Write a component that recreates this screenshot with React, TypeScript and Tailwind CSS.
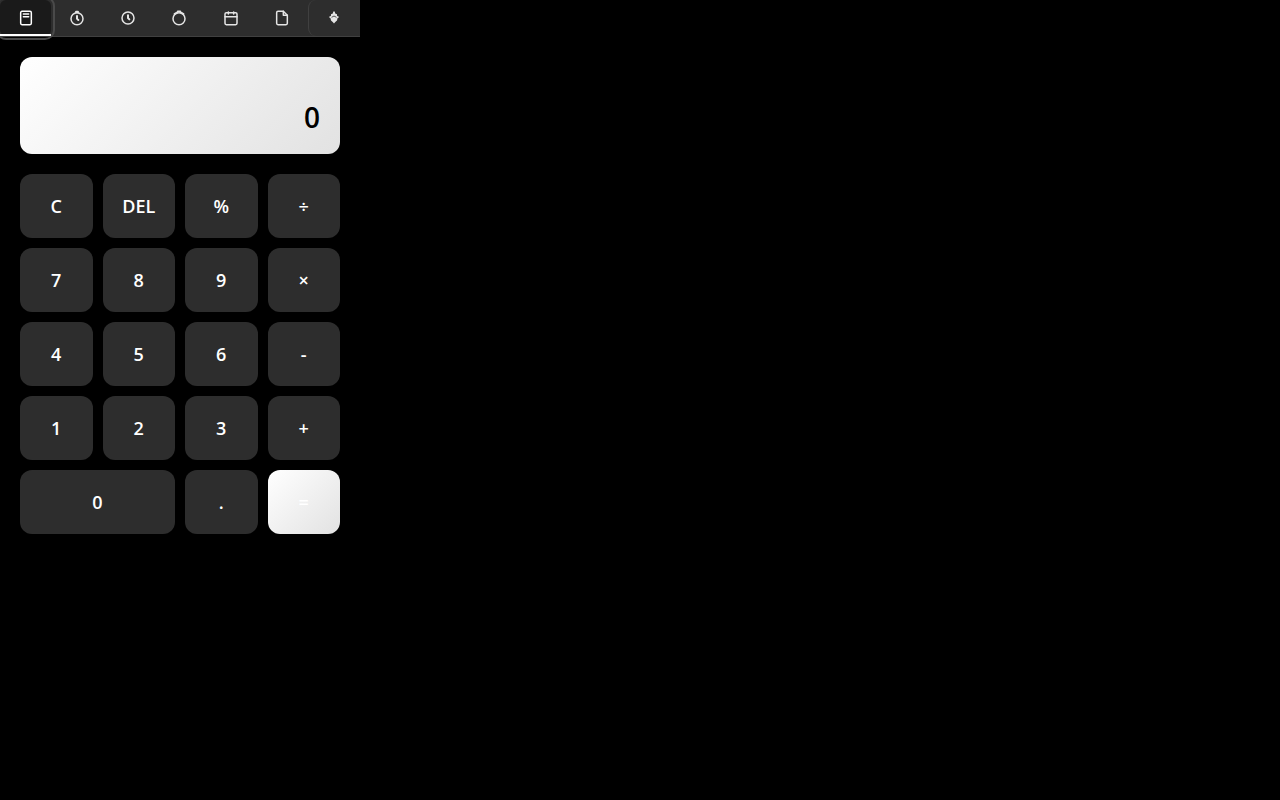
import { useState, type ReactNode } from 'react'

const tabs: { name: string; icon: ReactNode }[] = [
  { name: 'Calculator', icon: <><rect x="4" y="2" width="16" height="20" rx="2" /><path d="M8 6h8M8 10h8" /></> },
  { name: 'Stopwatch', icon: <><circle cx="12" cy="13" r="9" /><path d="M12 9v4l2 2" strokeWidth="3" /><path d="M11 3h2" strokeWidth="4" /></> },
  { name: 'Clock', icon: <><circle cx="12" cy="12" r="9" /><path d="M12 8v4l2 2" strokeWidth="3" /></> },
  { name: 'Timer', icon: <><circle cx="12" cy="13" r="9" /><path d="M10 2h4M5 6l5-3M19 6l-5-3" /></> },
  { name: 'Calendar', icon: <><rect x="3" y="4" width="18" height="18" rx="2" /><path d="M16 3v3M8 3v3M3 10h18" /></> },
  { name: 'Notes', icon: <><path d="M14 2H6a2 2 0 0 0-2 2v16a2 2 0 0 0 2 2h12a2 2 0 0 0 2-2V8z" /><path d="M14 2v6h6" /></> },
]

const keys = ['C', 'DEL', '%', '÷', '7', '8', '9', '×', '4', '5', '6', '-', '1', '2', '3', '+', '0', '.', '=']

function Icon({ children }: { children: ReactNode }) {
  return (
    <svg className="size-4" viewBox="0 0 24 24" fill="none" stroke="currentColor" strokeWidth="2.25" strokeLinecap="round" strokeLinejoin="round" aria-hidden="true">
      {children}
    </svg>
  )
}

function calculate(a: number, b: number, operator: string) {
  if (operator === '+') return a + b
  if (operator === '-') return a - b
  if (operator === '×') return a * b
  return a / b
}

export default function App() {
  const [active, setActive] = useState('Calculator')
  const [display, setDisplay] = useState('0')
  const [pending, setPending] = useState<{ value: number; operator: string } | null>(null)
  const [fresh, setFresh] = useState(true)

  function press(key: string) {
    const value = Number(display)
    if (key === 'C') {
      setDisplay('0')
      setPending(null)
      setFresh(true)
    } else if (key === 'DEL') {
      setDisplay(display.length > 1 ? display.slice(0, -1) : '0')
    } else if (key === '%') {
      setDisplay(String(value / 100))
    } else if (/[÷×+=-]/.test(key)) {
      const result = pending ? calculate(pending.value, value, pending.operator) : value
      setDisplay(String(result))
      setPending(key === '=' ? null : { value: result, operator: key })
      setFresh(true)
    } else {
      if (key === '.' && !fresh && display.includes('.')) return
      const start = key === '.' ? '0.' : key
      setDisplay(fresh || (display === '0' && key !== '.') ? start : display + key)
      setFresh(false)
    }
  }

  return (
    <div className="min-h-screen bg-black font-['Segoe_UI','Open_Sans',sans-serif] text-white">
      <main className="w-full max-w-[360px]">
        <nav className="flex h-[37px] border-b border-[#404040] bg-[#2d2d2d] text-[#e5e5e5]">
          {tabs.map(({ name, icon }) => (
            <button
              key={name}
              type="button"
              aria-label={name}
              aria-pressed={active === name}
              onClick={() => setActive(name)}
              className={
                active === name
                  ? "relative flex flex-1 items-center justify-center rounded-md bg-[#1a1a1a] text-white outline-2 outline-offset-2 outline-[#4a4a4a] after:absolute after:inset-x-0 after:bottom-0 after:h-0.5 after:bg-white after:content-['']"
                  : 'flex flex-1 items-center justify-center'
              }
            >
              <Icon>{icon}</Icon>
            </button>
          ))}
          <button type="button" aria-label="Settings" className="flex flex-1 items-center justify-center rounded-lg border-l border-[#404040]">
            <svg className="size-4" viewBox="0 0 16 16" fill="currentColor" aria-hidden="true">
              <path d="M7.3 1.5H8.7L9.2 3.6 11 4.3V5.8L13.2 7 11.5 8.3 11 10.5 9.3 12 8 13.6 6.7 12 5 10.5 4.5 8.3 2.8 7 5 5.8V4.3L6.8 3.6Z" />
              <path d="M5.5 7.3Q8 4.8 10.5 7.3" fill="none" stroke="#2d2d2d" strokeWidth="0.8" />
            </svg>
          </button>
        </nav>

        <section className="flex flex-col gap-5 p-5" aria-label="Calculator">
          <output className="flex h-[97px] items-end justify-end overflow-hidden rounded-xl bg-linear-[135deg,#ffffff,#e2e2e2] p-5 text-[28px] leading-[34px] font-semibold text-black">
            {display}
          </output>
          <div className="grid grid-cols-4 gap-2.5">
            {keys.map((key) => (
              <button
                key={key}
                type="button"
                onClick={() => press(key)}
                className={
                  key === '='
                    ? 'h-16 rounded-xl bg-linear-[135deg,#ffffff,#e2e2e2] text-lg font-semibold text-white'
                    : key === '0'
                      ? 'col-span-2 h-16 rounded-xl bg-[#2d2d2d] text-lg font-semibold text-white'
                      : 'h-16 rounded-xl bg-[#2d2d2d] text-lg font-semibold text-white'
                }
              >
                {key}
              </button>
            ))}
          </div>
        </section>
      </main>
    </div>
  )
}
